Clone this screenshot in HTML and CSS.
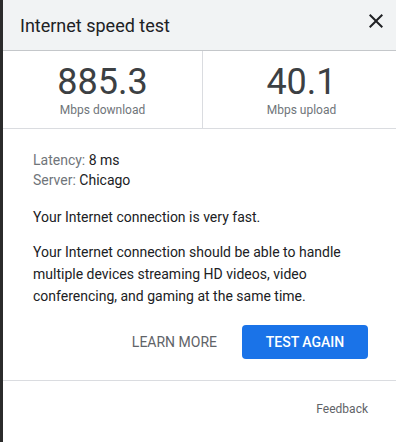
FILE: index.html
```html
<!DOCTYPE html>
<html>
<head>
<meta charset="utf-8">
<link rel="stylesheet" href="styles.css">
</head>
<body>
<div class="page">
  <div class="strip"></div>
  <div class="panel">
    <div class="header">
      <div class="title">Internet speed test</div>
      <svg class="close" width="24" height="24" viewBox="0 0 24 24"><path d="M19 6.41L17.59 5 12 10.59 6.41 5 5 6.41 10.59 12 5 17.59 6.41 19 12 13.41 17.59 19 19 17.59 13.41 12z" fill="#202124"/></svg>
    </div>
    <div class="stats">
      <div class="stat stat-left">
        <div class="num">885.3</div>
        <div class="unit">Mbps download</div>
      </div>
      <div class="stat stat-right">
        <div class="num">40.1</div>
        <div class="unit">Mbps upload</div>
      </div>
    </div>
    <div class="details">
      <div class="meta"><span class="label">Latency:</span> 8 ms</div>
      <div class="meta"><span class="label">Server:</span> Chicago</div>
      <p class="p1">Your Internet connection is very fast.</p>
      <p class="p2">Your Internet connection should be able to handle multiple devices streaming HD videos, video conferencing, and gaming at the same time.</p>
      <div class="actions">
        <div class="btn-text">LEARN MORE</div>
        <div class="btn-primary">TEST AGAIN</div>
      </div>
    </div>
    <div class="footer">
      <span class="feedback">Feedback</span>
    </div>
  </div>
</div>
</body>
</html>
```

FILE: styles.css
```css
html, body {
  margin: 0;
  padding: 0;
  background: #ffffff;
}
body {
  font-family: Roboto, "Liberation Sans", Arial, sans-serif;
  color: #202124;
}
.page {
  display: flex;
  width: 396px;
  height: 442px;
  overflow: hidden;
}
.strip {
  width: 3px;
  flex: 0 0 3px;
  background: #2b2b2b;
}
.panel {
  flex: 1;
  background: #ffffff;
  display: flex;
  flex-direction: column;
}
.header {
  height: 50px;
  background: #f1f3f4;
  border-bottom: 1px solid #c4c7ca;
  display: flex;
  justify-content: space-between;
  align-items: flex-start;
  padding: 0 8px 0 17px;
  box-sizing: content-box;
}
.title {
  padding-top: 14px;
  font-size: 18px;
  line-height: 24px;
  color: #202124;
}
.close {
  margin-top: 9px;
  display: block;
}
.stats {
  display: grid;
  grid-template-columns: 200px 1fr;
  height: 77px;
  border-bottom: 1px solid #dadce0;
}
.stat {
  display: flex;
  flex-direction: column;
  align-items: center;
  padding-top: 10px;
}
.stat-left {
  border-right: 1px solid #dadce0;
}
.stat-right {
  padding-left: 4px;
}
.num {
  font-size: 36px;
  line-height: 42px;
  color: #3c4043;
}
.unit {
  font-size: 12px;
  line-height: 14px;
  color: #70757a;
}
.details {
  padding: 21px 28px 21px 30px;
  border-bottom: 1px solid #dadce0;
}
.meta {
  font-size: 14px;
  line-height: 20px;
  color: #202124;
}
.label {
  color: #70757a;
}
.p1, .p2 {
  margin: 0;
  font-size: 14px;
  line-height: 22px;
  color: #202124;
}
.p1 {
  margin-top: 16px;
}
.p2 {
  margin-top: 13px;
}
.actions {
  margin-top: 18px;
  display: flex;
  justify-content: flex-end;
  align-items: center;
}
.btn-text {
  font-size: 14px;
  line-height: 34px;
  color: #5f6368;
  padding: 0 16px;
  margin-right: 9px;
}
.btn-primary {
  width: 126px;
  height: 34px;
  border-radius: 4px;
  background: #1a73e8;
  color: #ffffff;
  font-size: 14px;
  font-weight: 500;
  line-height: 34px;
  text-align: center;
}
.footer {
  padding: 20px 28px 0 0;
  display: flex;
  justify-content: flex-end;
}
.feedback {
  font-size: 12px;
  line-height: 16px;
  color: #5f6368;
}
```
